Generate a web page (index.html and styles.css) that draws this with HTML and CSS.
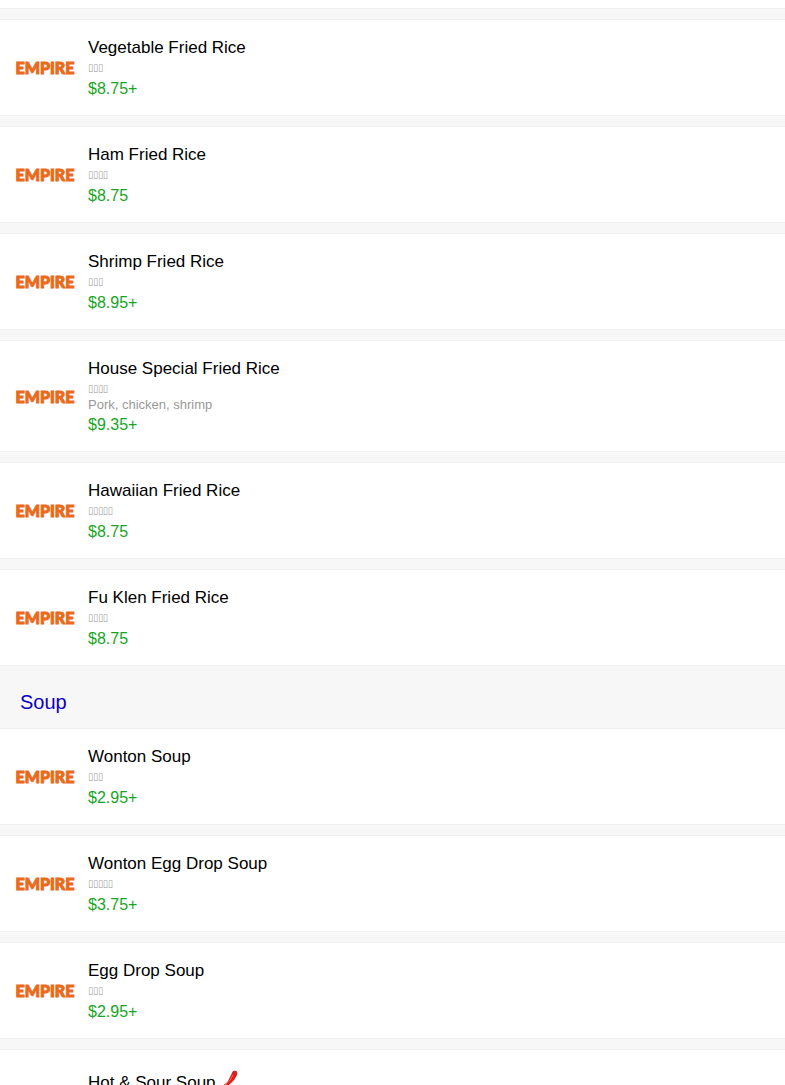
FILE: index.html
```
<!DOCTYPE html>
<html lang="en">
<head>
  <meta charset="UTF-8">
  <title>Menu</title>
  <meta name="viewport" content="width=device-width, initial-scale=1.0">
  <link rel="stylesheet" href="styles.css">
</head>
<body>
<div class="menu">
  <div class="list-end"></div>
  <div class="item">
    <div class="logo">EMPIRE</div>
    <div class="info">
      <div class="name">Vegetable Fried Rice</div>
      <div class="alt">▯▯▯</div>
      <div class="price">$8.75+</div>
    </div>
  </div>
  <div class="item">
    <div class="logo">EMPIRE</div>
    <div class="info">
      <div class="name">Ham Fried Rice</div>
      <div class="alt">▯▯▯▯</div>
      <div class="price">$8.75</div>
    </div>
  </div>
  <div class="item">
    <div class="logo">EMPIRE</div>
    <div class="info">
      <div class="name">Shrimp Fried Rice</div>
      <div class="alt">▯▯▯</div>
      <div class="price">$8.95+</div>
    </div>
  </div>
  <div class="item">
    <div class="logo">EMPIRE</div>
    <div class="info">
      <div class="name">House Special Fried Rice</div>
      <div class="alt">▯▯▯▯</div>
      <div class="desc">Pork, chicken, shrimp</div>
      <div class="price">$9.35+</div>
    </div>
  </div>
  <div class="item">
    <div class="logo">EMPIRE</div>
    <div class="info">
      <div class="name">Hawaiian Fried Rice</div>
      <div class="alt">▯▯▯▯▯</div>
      <div class="price">$8.75</div>
    </div>
  </div>
  <div class="item">
    <div class="logo">EMPIRE</div>
    <div class="info">
      <div class="name">Fu Klen Fried Rice</div>
      <div class="alt">▯▯▯▯</div>
      <div class="price">$8.75</div>
    </div>
  </div>

  <h2 class="category"><a href="#soup" id="soup">Soup</a></h2>
  <div class="item">
    <div class="logo">EMPIRE</div>
    <div class="info">
      <div class="name">Wonton Soup</div>
      <div class="alt">▯▯▯</div>
      <div class="price">$2.95+</div>
    </div>
  </div>
  <div class="item">
    <div class="logo">EMPIRE</div>
    <div class="info">
      <div class="name">Wonton Egg Drop Soup</div>
      <div class="alt">▯▯▯▯▯</div>
      <div class="price">$3.75+</div>
    </div>
  </div>
  <div class="item">
    <div class="logo">EMPIRE</div>
    <div class="info">
      <div class="name">Egg Drop Soup</div>
      <div class="alt">▯▯▯</div>
      <div class="price">$2.95+</div>
    </div>
  </div>
  <div class="item item-tall">
    <div class="logo"></div>
    <div class="info">
      <div class="name spicy">Hot &amp; Sour Soup
        <svg class="chili" viewBox="0 0 24 24" aria-label="Spicy">
          <path d="M17 3q1-3 4-2 2 1 1 4-2 5-7 9-5 5-13 6-2-1 0-2 7-2 11-7Q15 7 17 3z" fill="#e41a16"/>
          <path d="M18 5q-3 7-8 10" fill="none" stroke="#f4726a" stroke-width="1"/>
          <path d="M17 3q1-3 4-2 2 1 1 3-2-2-5-1z" fill="#b5352a"/>
        </svg>
      </div>
    </div>
  </div>
</div>
</body>
</html>
```

FILE: styles.css
```
body {
  margin: 0;
  background: #f7f7f7;
  color: #000;
  font-family: "Liberation Sans", Arial, sans-serif;
}
.menu {
  height: 100vh;
  overflow: hidden;
}
/* bottom edge of the row above */
.list-end {
  height: 8px;
  background: #fff;
  border-bottom: 1px solid #f0f0f0;
  margin-bottom: 10px;
}
.item {
  display: flex;
  align-items: center;
  padding: 15px 15px 14px;
  margin-bottom: 10px;
  background: #fff;
  border-top: 1px solid #f0f0f0;
  border-bottom: 1px solid #f0f0f0;
}
.item-tall {
  min-height: 75px;
  align-items: flex-start;
}
.logo {
  width: 60px;
  margin-right: 13px;
  text-align: center;
  font-family: Lato, sans-serif;
  font-size: 16px;
  line-height: 18px;
  font-weight: 900;
  color: #ea6a1c;
  -webkit-text-stroke: 1px #ea6a1c;
}
.name {
  font-size: 17px;
  line-height: 25px;
}
.spicy {
  display: flex;
  align-items: center;
  line-height: 36px;
}
.chili {
  width: 24px;
  height: 24px;
  margin-left: -1px;
  margin-bottom: 2px;
}
.alt {
  font-family: "DejaVu Sans Condensed", "DejaVu Sans", sans-serif;
  font-size: 10px;
  line-height: 16px;
  color: #999;
}
.desc {
  font-size: 13px;
  line-height: 15px;
  color: #999;
}
.price {
  font-size: 16px;
  line-height: 25px;
  color: #17a51f;
}
.category {
  margin: 0;
  padding: 14px 20px;
  font-size: 20px;
  font-weight: normal;
  line-height: 24px;
}
.category a {
  color: #0c00c8;
  text-decoration: none;
}
```
